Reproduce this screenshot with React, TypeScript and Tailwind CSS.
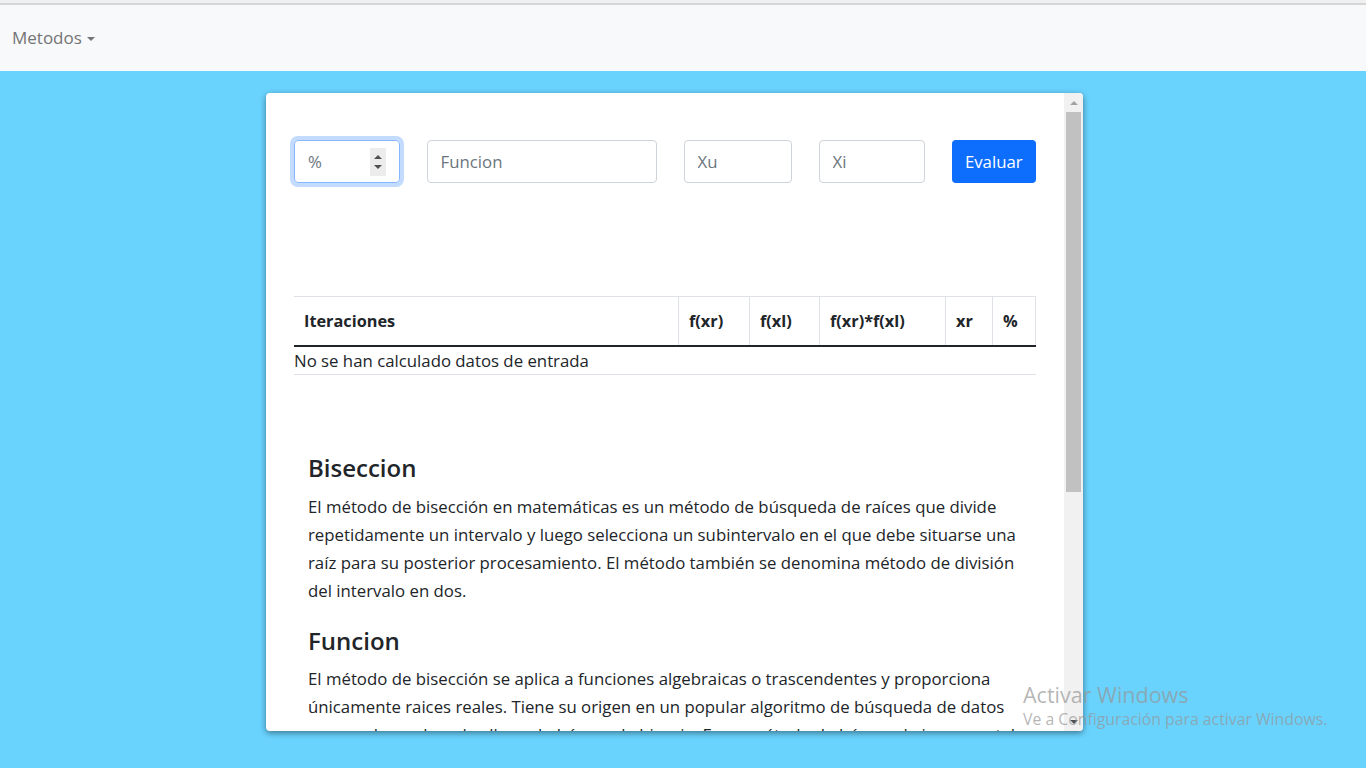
import React from "react";

// Encabezados de la tabla de iteraciones
const columns = ["f(xr)", "f(xl)", "f(xr)*f(xl)", "xr", "%"];
const colWidths = ["w-[71px]", "w-[70px]", "w-[126px]", "w-[47px]", "w-[44px]"];

export default function App() {
  return (
    <div className="relative min-h-screen bg-[#69d3fe] font-['Open_Sans',sans-serif] text-[#212529]">
      {/* Barra superior */}
      <div className="h-[3px] bg-[#f0f0f0]" />
      <div className="h-[2px] bg-[#d6d6d6]" />
      <nav className="h-[66px] bg-[#f8f9fa] flex items-center px-[12px]">
        <button className="flex items-center gap-[5px] text-[17px] text-[#737475]">
          Metodos
          <span className="w-0 h-0 border-l-[4px] border-r-[4px] border-t-[4px] border-l-transparent border-r-transparent border-t-[#737475] mt-[1px]" />
        </button>
      </nav>

      <div className="pt-[22px] pl-[266px]">
        <div className="w-[817px] h-[638px] bg-white rounded-[4px] shadow-[0_2px_6px_rgba(0,0,0,0.45)] flex overflow-hidden">
          <div className="flex-1 overflow-hidden px-[28px] pt-[47px]">
            <Inputs />
            <IterationsTable />
            <Description />
          </div>
          <FakeScrollbar />
        </div>
      </div>

      {/* Marca de agua de Windows */}
      <div className="absolute left-[1023px] top-[682px] pointer-events-none font-['Open_Sans',sans-serif] text-[rgba(150,150,150,0.7)] leading-tight">
        <div className="text-[21.5px]">Activar Windows</div>
        <div className="text-[15.8px] mt-[1px]">Ve a Configuración para activar Windows.</div>
      </div>
    </div>
  );
}

function Inputs() {
  return (
    <div className="flex items-center gap-[27px]">
      <div className="w-[106px] h-[43px] rounded-[4px] border border-[#86b7fe] shadow-[0_0_0_4px_rgba(13,110,253,0.25)] flex items-center pl-[13px] pr-[13px]">
        <span className="flex-1 text-[16.8px] text-[#6c757d]">%</span>
        <div className="w-[16px] h-[28px] bg-[#ececec] flex flex-col items-center justify-center gap-[6px]">
          <span className="w-0 h-0 border-l-[4px] border-r-[4px] border-b-[4px] border-l-transparent border-r-transparent border-b-[#505050]" />
          <span className="w-0 h-0 border-l-[4px] border-r-[4px] border-t-[4px] border-l-transparent border-r-transparent border-t-[#505050]" />
        </div>
      </div>
      <input
        placeholder="Funcion"
        className="w-[230px] h-[43px] rounded-[4px] border border-[#ced4da] px-[13px] text-[16.8px] placeholder:text-[#6c757d] outline-none"
      />
      <input
        placeholder="Xu"
        className="w-[108px] h-[43px] rounded-[4px] border border-[#ced4da] px-[13px] text-[16.8px] placeholder:text-[#6c757d] outline-none"
      />
      <input
        placeholder="Xi"
        className="w-[106px] h-[43px] rounded-[4px] border border-[#ced4da] px-[13px] text-[16.8px] placeholder:text-[#6c757d] outline-none"
      />
      <button className="w-[85px] h-[43px] rounded-[4px] bg-[#0d6efd] text-white text-[16.8px]">Evaluar</button>
    </div>
  );
}

function IterationsTable() {
  return (
    <div className="mt-[113px]">
      <div className="flex h-[48px] border-t border-[#dee2e6] border-b-2 border-b-[#212529] box-content">
        <div className="flex-1 flex items-center px-[10px] font-bold text-[16.3px]">Iteraciones</div>
        {columns.map((c, i) => (
          <div key={c} className={`${colWidths[i]} flex items-center px-[10px] border-l border-[#dee2e6] font-bold text-[16.3px] ${i === columns.length - 1 ? "border-r" : ""}`}>
            {c}
          </div>
        ))}
      </div>
      <div className="h-[28px] flex items-center border-b border-[#dee2e6] text-[16.8px]">No se han calculado datos de entrada</div>
    </div>
  );
}

function Description() {
  return (
    <div className="px-[14px] mt-[76px]">
      <h3 className="text-[24px] font-semibold leading-[1.4] mb-[8px]">Biseccion</h3>
      <p className="text-[16.8px] leading-[28px] mb-[19px]">
        El método de bisección en matemáticas es un método de búsqueda de raíces que divide repetidamente un intervalo y luego selecciona un subintervalo en el que debe situarse una raíz para su posterior procesamiento. El método también se denomina método de división del intervalo en dos.
      </p>
      <h3 className="text-[24px] font-semibold leading-[1.4] mb-[8px]">Funcion</h3>
      <p className="text-[16.8px] leading-[28px]">
        El método de bisección se aplica a funciones algebraicas o trascendentes y proporciona únicamente raices reales. Tiene su origen en un popular algoritmo de búsqueda de datos en arreglos ordenados llamado búsqueda binaria. Es un método de búsqueda incremental donde el intervalo de búsqueda se divide siempre en dos.
      </p>
    </div>
  );
}

function FakeScrollbar() {
  return (
    <div className="w-[19px] bg-[#f1f1f1] flex flex-col items-center">
      <div className="h-[19px] flex items-center justify-center">
        <span className="w-0 h-0 border-l-[4px] border-r-[4px] border-b-[4px] border-l-transparent border-r-transparent border-b-[#a3a3a3]" />
      </div>
      <div className="w-[15px] h-[380px] bg-[#c1c1c1]" />
      <div className="flex-1" />
      <div className="h-[19px] flex items-center justify-center">
        <span className="w-0 h-0 border-l-[4px] border-r-[4px] border-t-[4px] border-l-transparent border-r-transparent border-t-[#505050]" />
      </div>
    </div>
  );
}
